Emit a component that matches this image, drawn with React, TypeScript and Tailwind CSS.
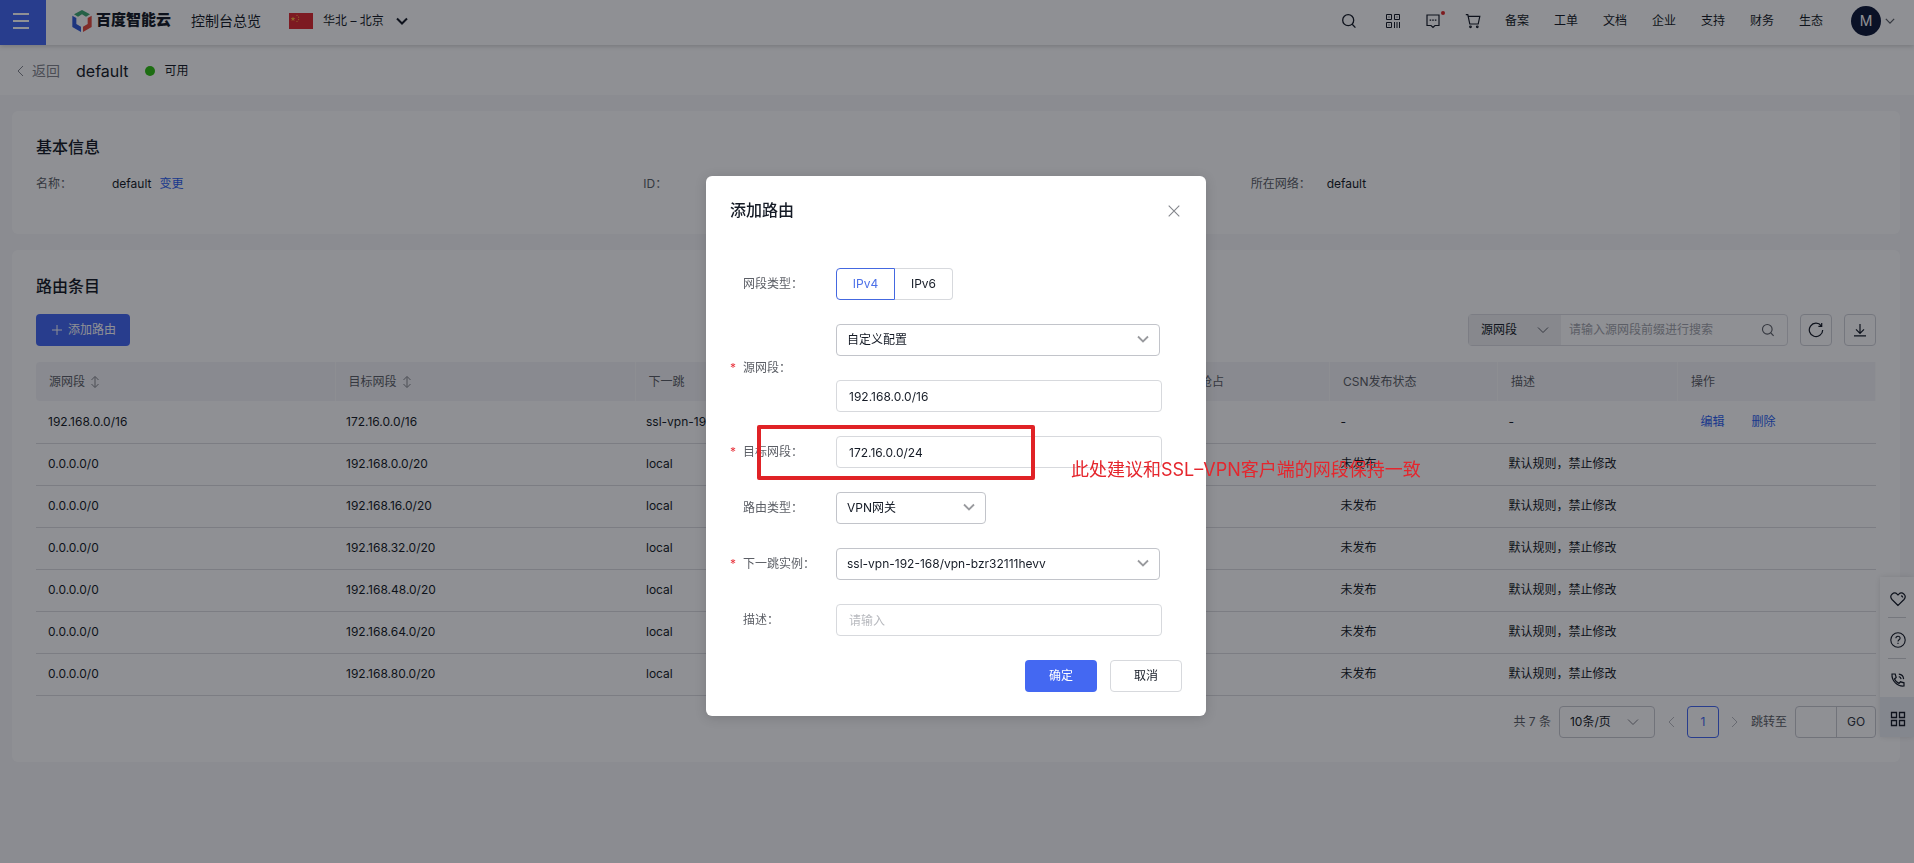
import React, { useState } from 'react';

type Route = {
  source: string;
  target: string;
  nextHop: string;
  status: string;
  description: string;
  editable?: boolean;
};

const defaultRule = { nextHop: 'local', status: '未发布', description: '默认规则，禁止修改' };

const routes: Route[] = [
  {
    source: '192.168.0.0/16',
    target: '172.16.0.0/16',
    nextHop: 'ssl-vpn-192-168/vpn-bzr32111hevv',
    status: '-',
    description: '-',
    editable: true,
  },
  { source: '0.0.0.0/0', target: '192.168.0.0/20', ...defaultRule },
  { source: '0.0.0.0/0', target: '192.168.16.0/20', ...defaultRule },
  { source: '0.0.0.0/0', target: '192.168.32.0/20', ...defaultRule },
  { source: '0.0.0.0/0', target: '192.168.48.0/20', ...defaultRule },
  { source: '0.0.0.0/0', target: '192.168.64.0/20', ...defaultRule },
  { source: '0.0.0.0/0', target: '192.168.80.0/20', ...defaultRule },
];

const navLinks = ['备案', '工单', '文档', '企业', '支持', '财务', '生态'];

type IconProps = { className?: string };

const Chevron: React.FC<IconProps & { strokeWidth?: number }> = ({ className, strokeWidth = 1 }) => (
  <svg viewBox="0 0 12 8" fill="none" stroke="currentColor" strokeWidth={strokeWidth} className={className}>
    <path d="M1 1.5 6 6.5 11 1.5" />
  </svg>
);

const Angle: React.FC<IconProps> = ({ className }) => (
  <svg viewBox="0 0 8 12" fill="none" stroke="currentColor" className={className}>
    <path d="M7 1 2 6l5 5" />
  </svg>
);

const SearchIcon: React.FC<IconProps> = ({ className }) => (
  <svg viewBox="0 0 16 16" fill="none" stroke="currentColor" strokeWidth="1.3" className={className}>
    <circle cx="7.2" cy="7.2" r="5.5" />
    <path d="m11.2 11.2 3.2 3.4" />
  </svg>
);

const SortIcon: React.FC = () => (
  <svg viewBox="0 0 8 14" fill="none" stroke="currentColor" className="h-3.5 w-2 text-[#84868c]">
    <path d="M4 2v10M.5 5 4 1.4l3.5 3.6M.5 9 4 12.6l3.5-3.6" />
  </svg>
);

const Logo: React.FC = () => (
  <svg viewBox="0 0 58 66" className="h-[22px] w-5">
    <path d="M29 0 53 13 41 20 29 13 17 20 5 13z" fill="#3fa973" />
    <path d="M0 17 12 24V42L26 50V66L0 51z" fill="#3159d8" />
    <path d="M58 17 46 24V42L32 50V66L58 51z" fill="#e34a3c" />
  </svg>
);

const ChinaFlag: React.FC = () => (
  <svg viewBox="0 0 24 16" className="h-4 w-6">
    <rect width="24" height="16" fill="#de2830" />
    <path d="m4 3.4.6 1.7h1.8L5 6.2l.5 1.7L4 6.9l-1.5 1L3 6.2 1.6 5.1h1.8z" fill="#ffb13d" />
    <circle cx="8" cy="2.4" r=".6" fill="#ffb13d" />
    <circle cx="9.6" cy="4.2" r=".6" fill="#ffb13d" />
    <circle cx="9.6" cy="6.6" r=".6" fill="#ffb13d" />
    <circle cx="8" cy="8.4" r=".6" fill="#ffb13d" />
  </svg>
);

const Header: React.FC = () => (
  <header className="relative z-10 flex h-[45px] items-center justify-between bg-white pr-[19px] shadow-[0_1px_5px_rgba(0,0,0,0.2)]">
    <div className="flex items-center">
      <button aria-label="菜单" className="flex h-[45px] w-[46px] items-center bg-[#4468f2] pb-1 pl-[13px]">
        <svg viewBox="0 0 16 16" stroke="#fff" strokeWidth="2" className="size-4">
          <path d="M0 1h16M0 8h16M0 15h16" />
        </svg>
      </button>
      <a href="#" className="ml-[26px] flex items-center gap-1 pb-1">
        <Logo />
        <span className="text-[15px] font-black text-[#151b26]">百度智能云</span>
      </a>
      <a href="#" className="ml-5 pb-1 text-sm">控制台总览</a>
      <button className="ml-7 flex items-center pb-1">
        <ChinaFlag />
        <span className="ml-2.5 text-xs">华北 – 北京</span>
        <Chevron className="ml-3 h-2 w-3" strokeWidth={2} />
      </button>
    </div>

    <nav className="flex items-center gap-6 pb-1 text-xs">
      <button aria-label="搜索" className="mr-1">
        <SearchIcon className="size-4" />
      </button>
      <button aria-label="小程序">
        <svg viewBox="0 0 16 16" fill="none" stroke="currentColor" className="size-4">
          <path d="M1.5 1.5h5v5h-5zM9.5 1.5h5v5h-5zM1.5 9.5h5v5h-5zM9.500 9v6M12 9v6M14.5 9v6M3.500 4h1M11.500 4h1M3.500 12h1" />
        </svg>
      </button>
      <button aria-label="消息" className="relative">
        <svg viewBox="0 0 16 16" fill="none" stroke="currentColor" strokeWidth="1.2" className="size-4">
          <path d="M2 2h12v10.5H10L8 14.5 6 12.500H2zM4.600 7.200h1.600M7.200 7.200h1.600M9.800 7.200h1.600" />
        </svg>
        <span className="absolute -top-0.5 -right-1 size-1 rounded-full bg-[#e02b2b]" />
      </button>
      <button aria-label="购物车">
        <svg viewBox="0 0 16 16" fill="none" stroke="currentColor" strokeWidth="1.2" className="size-4">
          <path d="M.8 1.6h2l2 9.400h8.400l1.600-7.600H3.300" />
          <circle cx="5.5" cy="13.8" r=".8" />
          <circle cx="12.3" cy="13.8" r=".8" />
        </svg>
      </button>
      <div className="flex items-center gap-[25px]">
        {navLinks.map((link) => (
          <a key={link} href="#">{link}</a>
        ))}
      </div>
      <button className="ml-1 flex items-center gap-1">
        <span className="flex size-[30px] items-center justify-center rounded-full bg-[#0d1838] text-sm text-white">M</span>
        <Chevron className="h-2 w-2.5 text-[#5c5f66]" strokeWidth={1.5} />
      </button>
    </nav>
  </header>
);

const InfoItem: React.FC<{ label: string; children?: React.ReactNode }> = ({ label, children }) => (
  <div className="flex">
    <dt className="w-[76px] text-[#5c5f66]">{label}</dt>
    <dd className="flex gap-2">{children}</dd>
  </div>
);

const RouteTable: React.FC = () => (
  <table className="mt-4 w-full table-fixed text-left text-xs">
    <colgroup>
      <col className="w-[299px]" />
      <col className="w-[300px]" />
      <col />
      <col className="w-[167px]" />
      <col className="w-[168px]" />
      <col className="w-[180px]" />
      <col className="w-[198px]" />
    </colgroup>
    <thead className="bg-[#f5f5f7] text-[#5c5f66] [&_th]:border-r [&_th]:border-[#fbfbfc] [&_th]:pl-[13px] [&_th]:font-normal">
      <tr className="h-[39px]">
        <th className="rounded-l">
          <span className="flex items-center gap-1.5">源网段 <SortIcon /></span>
        </th>
        <th>
          <span className="flex items-center gap-1.5">目标网段 <SortIcon /></span>
        </th>
        <th>下一跳</th>
        <th>是否抢占</th>
        <th>CSN发布状态</th>
        <th>描述</th>
        <th>操作</th>
      </tr>
    </thead>
    <tbody className="[&_td]:border-b [&_td]:border-[#dcdde0] [&_td]:pl-[11px] [&_td:first-child]:pl-3">
      {routes.map((route) => (
        <tr key={route.target} className="h-[42px]">
          <td>{route.source}</td>
          <td>{route.target}</td>
          <td>{route.nextHop}</td>
          <td></td>
          <td>{route.status}</td>
          <td>{route.description}</td>
          <td>
            {route.editable && (
              <span className="flex gap-[27px] pl-3 text-[#2c5ff0]">
                <a href="#">编辑</a>
                <a href="#">删除</a>
              </span>
            )}
          </td>
        </tr>
      ))}
    </tbody>
  </table>
);

const Pagination: React.FC = () => (
  <div className="mt-2.5 flex items-center justify-end text-xs">
    <span className="text-[#5c5f66]">共 7 条</span>
    <div className="relative ml-2">
      <select aria-label="每页条数" className="h-8 w-24 appearance-none rounded border border-[#c8cad0] pl-2.5">
        <option>10条/页</option>
      </select>
      <Chevron className="pointer-events-none absolute top-3 right-4 h-2 w-3 text-[#84868c]" />
    </div>
    <button aria-label="上一页" className="flex w-8 justify-center text-[#b8babf]">
      <Angle className="h-3 w-2" />
    </button>
    <button className="size-8 rounded border border-[#4468f2] text-[#4468f2]">1</button>
    <button aria-label="下一页" className="flex w-8 justify-center text-[#b8babf]">
      <Angle className="h-3 w-2 rotate-180" />
    </button>
    <label htmlFor="jump" className="text-[#5c5f66]">跳转至</label>
    <div className="ml-2 flex h-8 w-[81px] rounded border border-[#c8cad0]">
      <input id="jump" className="w-[41px] border-r border-[#c8cad0] px-1 outline-none" />
      <button className="flex-1 text-[#303540]">GO</button>
    </div>
  </div>
);

const SideTools: React.FC = () => (
  <aside className="fixed top-[577px] right-0 flex w-[34px] flex-col bg-white shadow-[0_0_6px_rgba(0,0,0,0.12)] [&_button]:flex [&_button]:items-center [&_button]:justify-center [&_button]:pt-1 [&_button]:pl-0.5">
    <button aria-label="收藏" className="h-10">
      <svg viewBox="0 0 16 16" fill="none" stroke="currentColor" strokeWidth="1.2" className="size-4">
        <path d="M8 14.5 2 8.500C.6 7 .6 4.700 2 3.200c1.500-1.400 3.800-1.400 5.200 0l.8.700.8-.7c1.400-1.400 3.700-1.400 5.200 0 1.400 1.500 1.400 3.800 0 5.300zM11 4.800c1 0 1.700.7 1.700 1.700" />
      </svg>
    </button>
    <span className="mx-2 h-px bg-[#d0d2d6]" />
    <button aria-label="帮助" className="h-10">
      <svg viewBox="0 0 16 16" fill="none" stroke="currentColor" strokeWidth="1.1" className="size-4">
        <circle cx="8" cy="8" r="7.2" />
        <path d="M5.900 6.300C5.900 5 6.800 4.200 8 4.200s2.100.8 2.100 2c0 1.500-2.100 1.600-2.100 3.200M8 10.800v1.200" />
      </svg>
    </button>
    <span className="mx-2 h-px bg-[#d0d2d6]" />
    <button aria-label="电话" className="h-[38px]">
      <svg viewBox="0 0 16 16" fill="none" stroke="currentColor" strokeWidth="1.2" className="size-4">
        <path d="M2 2h3.200l1 3.600-1.700 1.300c.9 2 2.400 3.500 4.500 4.500l1.400-1.600 3.600 1v3.200C7.500 14.800 1.500 8.800 2 2zM8.800 2.200c2.600.2 4.600 2.200 4.800 4.900M8.800 4.700c1.300.2 2.100 1 2.300 2.400" />
      </svg>
    </button>
    <button aria-label="更多" className="h-10 bg-[#eceef4]">
      <svg viewBox="0 0 16 16" fill="none" stroke="currentColor" strokeWidth="1.3" className="size-4">
        <path d="M1.5 1.5h5v5h-5zM9.5 1.5h5v5h-5zM1.5 9.5h5v5h-5zM9.5 9.5h5v5h-5z" />
      </svg>
    </button>
  </aside>
);

const FormRow: React.FC<{ label: string; htmlFor?: string; required?: boolean; children: React.ReactNode }> = ({
  label,
  htmlFor,
  required,
  children,
}) => (
  <div className="relative flex items-center">
    <span className="w-[13px] text-[#e8353e]">{required ? '*' : ''}</span>
    <label htmlFor={htmlFor} className="w-[93px] text-[#5c5f66]">{label}</label>
    {children}
  </div>
);

const Select: React.FC<{ id: string; width: string; value: string; label?: string }> = ({ id, width, value, label }) => (
  <div className={`relative ${width}`}>
    <select
      id={id}
      aria-label={label}
      className="h-8 w-full appearance-none rounded border border-[#c2c4ca] bg-white pl-2.5 outline-none"
    >
      <option>{value}</option>
    </select>
    <Chevron className="pointer-events-none absolute top-[11px] right-[11px] h-2 w-3 text-[#999a9e]" strokeWidth={1.8} />
  </div>
);

const inputClass =
  'h-8 w-[326px] rounded border border-[#d7d9dd] bg-white px-3 outline-none placeholder:text-[#b8babf]';

const AddRouteDialog: React.FC = () => {
  const [ipVersion, setIpVersion] = useState<'IPv4' | 'IPv6'>('IPv4');
  const [source, setSource] = useState('192.168.0.0/16');
  const [target, setTarget] = useState('172.16.0.0/24');
  const [description, setDescription] = useState('');

  return (
    <div role="dialog" aria-label="添加路由" className="w-[500px] rounded-md bg-white p-6 text-xs shadow-[0_2px_12px_rgba(0,0,0,0.15)]">
      <div className="flex h-5 items-center justify-between">
        <h2 className="text-base font-medium">添加路由</h2>
        <button aria-label="关闭" className="pt-0.5 pr-0.5">
          <svg viewBox="0 0 12 12" stroke="#84868c" strokeWidth="1.1" className="size-3">
            <path d="m.7.7 10.600 10.600M11.300.7.700 11.300" />
          </svg>
        </button>
      </div>

      <div className="mt-12 flex flex-col gap-6">
        <FormRow label="网段类型：">
          <div className="flex h-8 w-[117px]">
            {(['IPv4', 'IPv6'] as const).map((version) => (
              <button
                key={version}
                onClick={() => setIpVersion(version)}
                className={
                  version === ipVersion
                    ? 'flex-1 border border-[#4468e0] text-[#4b6fe8] first:rounded-l last:rounded-r'
                    : 'flex-1 border border-[#d7d9dd] first:rounded-l first:border-r-0 last:rounded-r last:border-l-0'
                }
              >
                {version}
              </button>
            ))}
          </div>
        </FormRow>

        <FormRow label="源网段：" htmlFor="source" required>
          <div className="flex flex-col gap-6">
            <Select id="source-mode" width="w-[324px]" value="自定义配置" label="源网段配置方式" />
            <input id="source" className={inputClass} value={source} onChange={(e) => setSource(e.target.value)} />
          </div>
        </FormRow>

        <FormRow label="目标网段：" htmlFor="target" required>
          <input id="target" className={inputClass} value={target} onChange={(e) => setTarget(e.target.value)} />
          {/* Annotation over the target segment */}
          <div className="pointer-events-none absolute -top-[11px] left-[27px] h-[55px] w-[278px] rounded-xs border-4 border-[#e02226]" />
          <p className="pointer-events-none absolute top-5 left-[341px] text-lg whitespace-nowrap text-[#e5262d]">
            此处建议和SSL–VPN客户端的网段保持一致
          </p>
        </FormRow>

        <FormRow label="路由类型：" htmlFor="route-type">
          <Select id="route-type" width="w-[150px]" value="VPN网关" />
        </FormRow>

        <FormRow label="下一跳实例：" htmlFor="next-hop" required>
          <Select id="next-hop" width="w-[324px]" value="ssl-vpn-192-168/vpn-bzr32111hevv" />
        </FormRow>

        <FormRow label="描述：" htmlFor="description">
          <input
            id="description"
            className={inputClass}
            placeholder="请输入"
            value={description}
            onChange={(e) => setDescription(e.target.value)}
          />
        </FormRow>
      </div>

      <div className="mt-6 flex justify-end gap-[13px]">
        <button className="h-8 w-[72px] rounded bg-[#4468f2] text-white">确定</button>
        <button className="h-8 w-[72px] rounded border border-[#d7d9dd]">取消</button>
      </div>
    </div>
  );
};

export default function App() {
  return (
    <div className="min-h-screen bg-[#f7f7f9] font-[Inter,'Noto_Sans_CJK_SC',sans-serif] text-[#151b26]">
      <Header />

      <div className="flex h-[50px] items-center bg-white pt-0.5 pl-4">
        <a href="#" className="flex items-center gap-2 text-sm text-[#84868c]">
          <Angle className="h-3 w-2" />
          返回
        </a>
        <h1 className="ml-4 text-base">default</h1>
        <span className="ml-4 size-2.5 rounded-full bg-[#30bf13]" />
        <span className="ml-2.5 text-xs">可用</span>
      </div>

      <main className="flex flex-col gap-4 py-4 pr-3.5 pl-3">
        <section className="h-[123px] rounded-md bg-white px-6 pt-6">
          <h2 className="text-base font-medium">基本信息</h2>
          <dl className="mt-[17px] grid grid-cols-3 pr-[18px] text-xs">
            <InfoItem label="名称：">
              default
              <a href="#" className="text-[#2c5ff0]">变更</a>
            </InfoItem>
            <InfoItem label="ID：" />
            <InfoItem label="所在网络：">default</InfoItem>
          </dl>
        </section>

        <section className="rounded-md bg-white p-6">
          <h2 className="text-base font-medium">路由条目</h2>
          <div className="mt-4 flex items-center justify-between text-xs">
            <button className="flex h-8 items-center gap-1.5 rounded bg-[#4468f2] pr-3.5 pl-4 text-white">
              <svg viewBox="0 0 10 10" stroke="currentColor" className="size-2.5">
                <path d="M5 0v10M0 5h10" />
              </svg>
              添加路由
            </button>
            <div className="flex gap-3">
              <div className="flex h-8 w-80 rounded border border-[#dcdde2]">
                <div className="relative">
                  <select aria-label="搜索字段" className="h-full w-[92px] appearance-none bg-[#f0f0f3] pl-3">
                    <option>源网段</option>
                  </select>
                  <Chevron className="pointer-events-none absolute top-[11px] right-3 h-2 w-3 text-[#5c5f66]" />
                </div>
                <input
                  aria-label="搜索"
                  placeholder="请输入源网段前缀进行搜索"
                  className="min-w-0 flex-1 pl-2 outline-none placeholder:text-[#a3a5ab]"
                />
                <button aria-label="搜索" className="pr-3 text-[#5c5f66]">
                  <SearchIcon className="size-3.5" />
                </button>
              </div>
              <button aria-label="刷新" className="flex size-8 items-center justify-center rounded border border-[#d0d2d8]">
                <svg viewBox="0 0 16 16" fill="none" stroke="currentColor" strokeWidth="1.2" className="size-4">
                  <path d="M13.300 3.800A6.700 6.700 0 1 0 14.700 8M13.700 1v3.300h-3.300" />
                </svg>
              </button>
              <button aria-label="下载" className="flex size-8 items-center justify-center rounded border border-[#d0d2d8]">
                <svg viewBox="0 0 14 14" fill="none" stroke="currentColor" strokeWidth="1.2" className="size-3.5">
                  <path d="M7 1v9M3 6.300l4 4 4-4M1 12.900h12" />
                </svg>
              </button>
            </div>
          </div>
          <RouteTable />
          <Pagination />
        </section>
      </main>

      <SideTools />

      <div className="fixed inset-0 z-20 flex items-start justify-center bg-[#070912]/45 pt-44 pr-0.5">
        <AddRouteDialog />
      </div>
    </div>
  );
}
